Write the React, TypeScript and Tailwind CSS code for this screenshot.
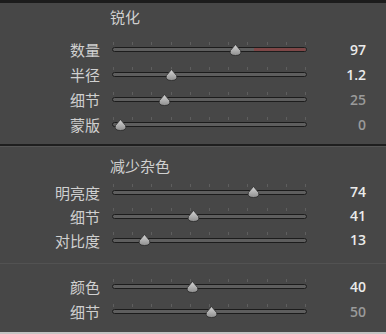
import React from 'react';

type Row = { label: string; pos: number; value: string; dim?: boolean; red?: boolean };

const TICKS = [0, 1, 2, 3, 4, 5, 6, 7, 8, 9, 10];

const Thumb = () => (
  <svg width="13" height="12" viewBox="0 0 13 12">
    <defs>
      <linearGradient id="tg" x1="0" y1="0" x2="0" y2="1">
        <stop offset="0" stopColor="#d6d6d6" />
        <stop offset="1" stopColor="#8e8e8e" />
      </linearGradient>
    </defs>
    <path d="M6.5 0.5 L11.6 6.6 Q13 11.5 6.5 11.5 Q0 11.5 1.4 6.6 Z" fill="url(#tg)" stroke="#2a2a2a" strokeWidth="0.8" />
  </svg>
);

const Slider = ({ row, h }: { row: Row; h: string }) => (
  <div className={`flex items-center ${h}`}>
    <div className="w-[100px] text-right text-[15px] leading-none text-[#d0d0d0]">{row.label}</div>
    <div className="relative ml-[12px] w-[195px] h-full flex items-center">
      <div className="absolute left-[1px] right-[1px] top-[calc(50%-8px)] flex justify-between">
        {TICKS.map((t) => (
          <div key={t} className="w-px h-[3px] bg-[#5e5e5e]" />
        ))}
      </div>
      <div className="relative w-full h-[5px] rounded-full bg-[#5e5e5e] border border-[#1c1c1c] overflow-hidden">
        {row.red && (
          <div className="absolute top-0 bottom-0 right-0 bg-[#7e4747]" style={{ left: `${row.pos + 18}px` }} />
        )}
      </div>
      <div className="absolute top-[calc(50%-6px)]" style={{ left: `${row.pos - 6}px` }}>
        <Thumb />
      </div>
    </div>
    <div
      className={`w-[59px] text-right text-[14px] font-semibold leading-none ${row.dim ? 'text-[#9a9a9a]' : 'text-[#ebebeb]'}`}
      style={{ fontFamily: '"Open Sans", sans-serif' }}
    >
      {row.value}
    </div>
  </div>
);

const sharpen: Row[] = [
  { label: '数量', pos: 123, value: '97', red: true },
  { label: '半径', pos: 59, value: '1.2' },
  { label: '细节', pos: 52, value: '25', dim: true },
  { label: '蒙版', pos: 8, value: '0', dim: true },
];

const noise: Row[] = [
  { label: '明亮度', pos: 141, value: '74' },
  { label: '细节', pos: 81, value: '41' },
  { label: '对比度', pos: 32, value: '13' },
];

const color: Row[] = [
  { label: '颜色', pos: 80, value: '40' },
  { label: '细节', pos: 99, value: '50', dim: true },
];

export default function App() {
  return (
    <div
      className="w-[386px] h-[334px] bg-[#474747] flex flex-col overflow-hidden"
      style={{ fontFamily: '"Noto Sans CJK SC", "Noto Sans", sans-serif' }}
    >
      <div className="h-[3px] bg-[#1c1c1c]" />
      <div className="h-[143px] flex flex-col border-b-2 border-[#1e1e1e]">
        <div className="mt-[4px] h-[20px] flex items-center pl-[110px] text-[15px] text-[#d0d0d0]">锐化</div>
        <div className="mt-[10px] flex flex-col">
          {sharpen.map((r) => (
            <Slider key={r.label} row={r} h="h-[25px]" />
          ))}
        </div>
      </div>
      <div className="h-[118px] flex flex-col border-t border-[#555555] border-b border-b-[#525252]">
        <div className="mt-[9px] h-[20px] flex items-center pl-[110px] text-[15px] text-[#d0d0d0]">减少杂色</div>
        <div className="mt-[4px] flex flex-col">
          {noise.map((r) => (
            <Slider key={r.label} row={r} h="h-[24px]" />
          ))}
        </div>
      </div>
      <div className="flex-1 flex flex-col pt-[10px]">
        {color.map((r) => (
          <Slider key={r.label + r.value} row={r} h="h-[25px]" />
        ))}
      </div>
      <div className="h-[2px] bg-[#c4c4c4]" />
    </div>
  );
}
